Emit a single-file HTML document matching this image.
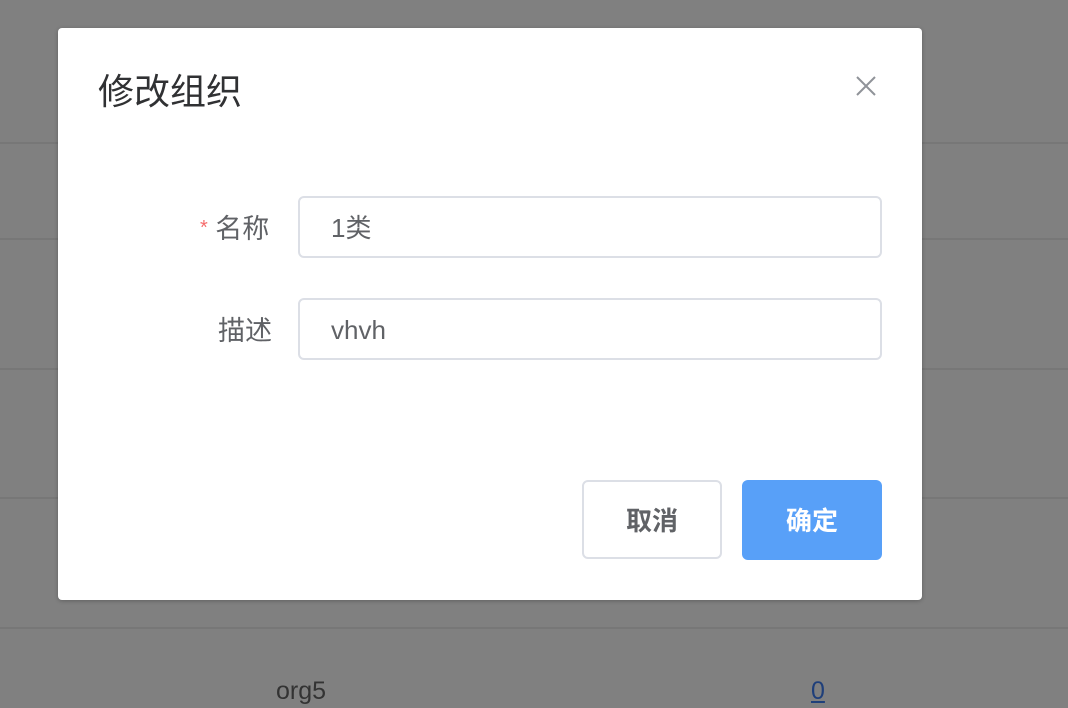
<!DOCTYPE html>
<html><head><meta charset="utf-8"><style>
body{margin:0;width:1068px;height:708px;background:#808080;position:relative;overflow:hidden;font-family:"Liberation Sans","Noto Sans CJK SC",sans-serif}
.l{position:absolute;left:0;right:0;height:2px;background:#777}
.d{position:absolute;left:58px;top:28px;width:864px;height:572px;background:#fff;border-radius:4px;box-shadow:0 1px 4px rgba(0,0,0,.25)}
.t{position:absolute;left:40px;top:44px;font-size:36px;color:#303133;line-height:40px}
.x{position:absolute;left:797px;top:47px}
.lab{position:absolute;font-size:27px;color:#606266;line-height:30px}
.in{position:absolute;left:240px;width:580px;height:58px;border:2px solid #dcdfe6;border-radius:6px;box-sizing:content-box}
.in span{position:absolute;left:31px;top:15px;font-size:26px;color:#606266;line-height:30px}
.b{position:absolute;top:452px;width:136px;height:76px;border-radius:6px;font-size:26px;font-weight:bold;text-align:center;line-height:76px}
</style></head><body>
<div class="l" style="top:142px"></div><div class="l" style="top:238px"></div><div class="l" style="top:368px"></div><div class="l" style="top:497px"></div><div class="l" style="top:627px"></div>
<div style="position:absolute;left:276px;top:677px;font-size:25px;color:#333">org5</div>
<div style="position:absolute;left:811px;top:677px;font-size:25px;color:#1f3f7a;text-decoration:underline">0</div>
<div class="d">
<div class="t">修改组织</div>
<svg class="x" width="22" height="22" viewBox="0 0 22 22"><path d="M2 2L20 20M20 2L2 20" stroke="#909399" stroke-width="2"/></svg>
<div class="lab" style="left:142px;top:186px"><span style="color:#f56c6c;font-size:20px;position:relative;top:-4px">*</span> 名称</div>
<div class="in" style="top:168px"><span>1类</span></div>
<div class="lab" style="left:160px;top:288px">描述</div>
<div class="in" style="top:270px"><span>vhvh</span></div>
<div class="b" style="left:524px;border:2px solid #dcdfe6;width:136px;height:75px;line-height:78px;color:#606266">取消</div>
<div class="b" style="left:684px;width:140px;height:80px;line-height:82px;background:#58a0f8;color:#fff">确定</div>
</div>
</body></html>
